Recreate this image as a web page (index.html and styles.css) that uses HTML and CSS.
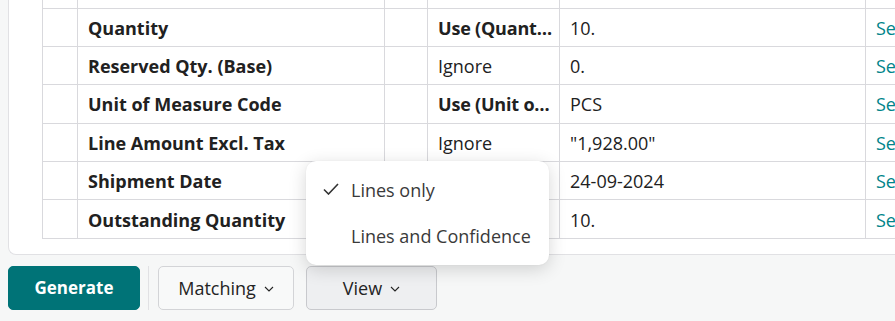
FILE: index.html
```html
<!DOCTYPE html>
<html lang="en">
<head>
    <meta charset="UTF-8">
    <title>Mapping lines</title>
    <link rel="stylesheet" href="styles.css">
</head>
<body>
    <div class="card">
        <table class="map-table">
            <colgroup>
                <col class="c-sel">
                <col class="c-field">
                <col class="c-gap">
                <col class="c-action">
                <col class="c-value">
                <col class="c-link">
            </colgroup>
            <tr class="cut-row">
                <td></td><td></td><td></td><td></td><td></td><td></td>
            </tr>
            <tr>
                <td></td>
                <td class="field">Quantity</td>
                <td></td>
                <td class="action strong">Use (Quantity)</td>
                <td>10.</td>
                <td class="link">See details</td>
            </tr>
            <tr>
                <td></td>
                <td class="field">Reserved Qty. (Base)</td>
                <td></td>
                <td class="action">Ignore</td>
                <td>0.</td>
                <td class="link">See details</td>
            </tr>
            <tr>
                <td></td>
                <td class="field">Unit of Measure Code</td>
                <td></td>
                <td class="action strong">Use (Unit of Measure)</td>
                <td>PCS</td>
                <td class="link">See details</td>
            </tr>
            <tr>
                <td></td>
                <td class="field">Line Amount Excl. Tax</td>
                <td></td>
                <td class="action">Ignore</td>
                <td>"1,928.00"</td>
                <td class="link">See details</td>
            </tr>
            <tr>
                <td></td>
                <td class="field">Shipment Date</td>
                <td></td>
                <td class="action">Ignore</td>
                <td>24-09-2024</td>
                <td class="link">See details</td>
            </tr>
            <tr>
                <td></td>
                <td class="field">Outstanding Quantity</td>
                <td></td>
                <td class="action">Ignore</td>
                <td>10.</td>
                <td class="link">See details</td>
            </tr>
        </table>
    </div>

    <div class="actions">
        <button class="btn primary">Generate</button>
        <span class="divider"></span>
        <button class="btn">Matching
            <svg class="chev" viewBox="0 0 10 6" width="10" height="6"><path d="M1 1l4 4 4-4" fill="none" stroke="currentColor" stroke-width="1.1"/></svg>
        </button>
        <div class="menu-wrap">
            <button class="btn active">View
                <svg class="chev" viewBox="0 0 10 6" width="10" height="6"><path d="M1 1l4 4 4-4" fill="none" stroke="currentColor" stroke-width="1.1"/></svg>
            </button>
            <ul class="menu">
                <li class="checked">
                    <svg class="tick" viewBox="0 0 16 12" width="16" height="12"><path d="M1 6.5l4.5 4.5L15 1" fill="none" stroke="currentColor" stroke-width="1.6"/></svg>
                    Lines only
                </li>
                <li>Lines and Confidence</li>
            </ul>
        </div>
    </div>
</body>
</html>
```

FILE: styles.css
```css
* {
    margin: 0;
    padding: 0;
    box-sizing: border-box;
}
:root {
    --teal: #007377;
    --link: #00848a;
    --line: #d9d9dd;
    --text: #212121;
    --page-bg: #f6f7f7;
}
body {
    font-family: 'Open Sans', 'Noto Sans', Arial, sans-serif;
    font-size: 18px;
    color: var(--text);
    background: var(--page-bg);
    width: 895px;
    height: 321px;
    overflow: hidden;
}
.card {
    background: #fff;
    margin-left: 8px;
    width: 920px;
    border: 1px solid #e1e1e4;
    border-top: none;
    border-right: none;
    border-radius: 0 0 0 8px;
    padding: 0 0 15px 33px;
}
.map-table {
    border-collapse: collapse;
    table-layout: fixed;
    width: 900px;
}
.c-sel { width: 35px; }
.c-field { width: 307px; }
.c-gap { width: 43px; }
.c-action { width: 132px; }
.c-value { width: 306px; }
.c-link { width: 77px; }
.map-table td {
    border: 1px solid var(--line);
    height: 38.4px;
    padding: 1px 10px 0;
    white-space: nowrap;
    overflow: hidden;
    text-overflow: ellipsis;
}
.map-table td.action {
    padding-right: 3px;
}
.map-table tr.cut-row td {
    height: 8px;
    border-top: none;
    padding: 0;
}
.field, .strong {
    font-weight: 700;
}
.strong {
    letter-spacing: -0.2px;
}
.link {
    color: var(--link);
}
.actions {
    display: flex;
    align-items: center;
    padding: 11px 0 0 8px;
}
.btn {
    font-family: inherit;
    font-size: 18px;
    height: 44px;
    border: 1px solid #d3d4d7;
    border-radius: 5px;
    background: #f8f9f9;
    color: #242424;
    display: flex;
    align-items: center;
    justify-content: center;
    gap: 8px;
    cursor: pointer;
}
.btn.primary {
    width: 132px;
    background: var(--teal);
    border-color: var(--teal);
    color: #fff;
    font-size: 17px;
    font-weight: 700;
}
.divider {
    width: 1px;
    height: 44px;
    background: #e1e1e4;
    margin: 0 9px 0 8px;
}
.actions > .btn:not(.primary) {
    width: 136px;
}
.menu-wrap {
    position: relative;
    margin-left: 12px;
}
.btn.active {
    width: 131px;
    background: #eeeff1;
    border-color: #c8c9cd;
}
.chev {
    margin-top: 2px;
}
.menu {
    list-style: none;
    position: absolute;
    left: 0;
    bottom: 45px;
    width: 243px;
    background: #fff;
    border-radius: 10px;
    box-shadow: 0 4px 18px rgba(0, 0, 0, 0.16), 0 0 2px rgba(0, 0, 0, 0.06);
    padding: 6px 0;
}
.menu li {
    display: flex;
    align-items: center;
    height: 46px;
    padding-left: 45px;
    color: #3a3a3a;
    position: relative;
}
.tick {
    position: absolute;
    left: 17px;
    top: 16px;
    color: #333;
}
```
